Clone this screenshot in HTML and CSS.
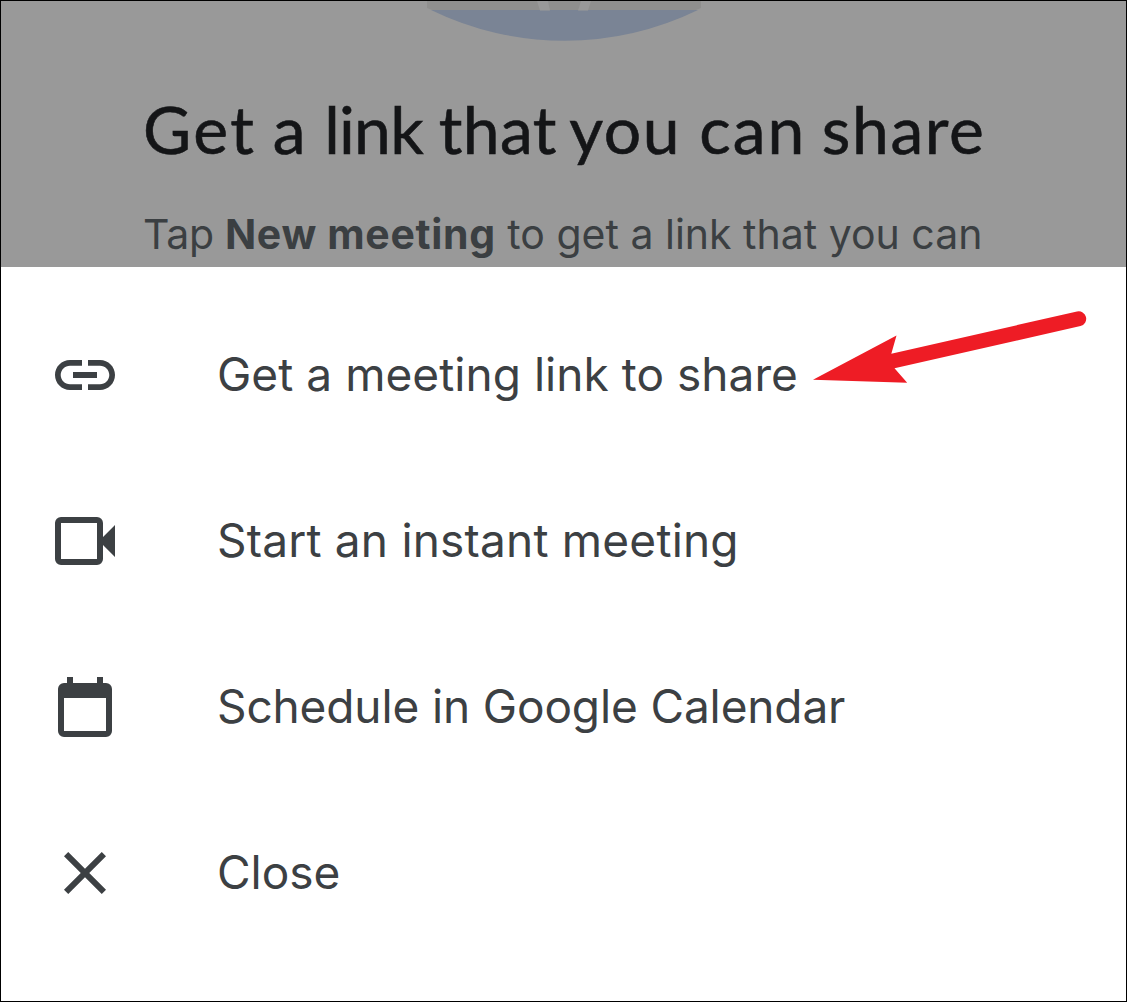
FILE: index.html
```
<!DOCTYPE html>
<html lang="en">
<head>
  <meta charset="utf-8">
  <title>New meeting</title>
  <link rel="stylesheet" href="styles.css">
</head>
<body>
  <main class="screen">
    <section class="page">
      <svg class="illustration" viewBox="0 0 290 42" aria-hidden="true">
        <path class="illustration-disc" d="M11 9H278A305 305 0 0 1 11 9Z"/>
        <path class="illustration-figure" d="M7 0H281V7L276 9H12L7 7Z"/>
        <path class="illustration-gap" d="M117 0H128L130 9.500H120ZM161 0H171L168 9.500H158Z"/>
      </svg>
      <h1 class="title"><span class="word-get">Get</span> a <span class="word-link">link</span> <span class="word-that">that</span> <span class="word-you">you</span> <span class="word-can">can</span> <span class="word-share">share</span></h1>
      <p class="hint"><span class="hint-lead">Tap </span><strong>New meeting</strong> to get a link that you can</p>
    </section>
    <ul class="sheet">
      <li class="option">
        <svg class="icon" viewBox="0 0 24 24" aria-hidden="true"><path d="M3.9 12c0-1.710 1.390-3.100 3.100-3.100h4V7H7c-2.760 0-5 2.240-5 5s2.240 5 5 5h4v-1.900H7c-1.710 0-3.100-1.390-3.100-3.100zM8 13h8v-2H8v2zm9-6h-4v1.900h4c1.710 0 3.100 1.390 3.100 3.100s-1.390 3.100-3.100 3.100h-4V17h4c2.760 0 5-2.240 5-5s-2.240-5-5-5z"/></svg>
        <span class="label label-link">Get a meeting link to share</span>
      </li>
      <li class="option">
        <svg class="icon" viewBox="0 0 24 24" aria-hidden="true"><path fill-rule="evenodd" d="M4 4h12a2 2 0 0 1 2 2v4.670l4-4v10.660l-4-4V18a2 2 0 0 1-2 2H4a2 2 0 0 1-2-2V6a2 2 0 0 1 2-2zM4 6v12h12V6z"/></svg>
        <span class="label label-instant">Start an instant meeting</span>
      </li>
      <li class="option">
        <svg class="icon" viewBox="0 0 24 24" aria-hidden="true"><path fill-rule="evenodd" d="M6 2h2v2h8V2h2v2h1a2 2 0 0 1 2 2v14a2 2 0 0 1-2 2H5a2 2 0 0 1-2-2V6a2 2 0 0 1 2-2h1zM5 9v11h14V9z"/></svg>
        <span class="label label-schedule">Schedule in Google Calendar</span>
      </li>
      <li class="option">
        <svg class="icon" viewBox="0 0 24 24" aria-hidden="true"><path d="M19 6.410L17.590 5 12 10.590 6.410 5 5 6.410 10.590 12 5 17.590 6.410 19 12 13.410 17.590 19 19 17.590 13.410 12z"/></svg>
        <span class="label">Close</span>
      </li>
    </ul>
    <svg class="pointer" viewBox="0 0 280 80" aria-hidden="true"><path d="M3 69.800L86.500 25.500 81.300 43.700 267 1.500A7.400 7.400 0 0 1 270.500 16L84.500 58.200 97.200 72.700Z"/></svg>
  </main>
</body>
</html>
```
FILE: styles.css
```
* {
  box-sizing: border-box;
}

body {
  margin: 0;
  font-family: Inter, "Liberation Sans", sans-serif;
  color: #3c4043;
  background: #fff;
}

.screen {
  position: relative;
  display: flex;
  flex-direction: column;
  width: 1127px;
  height: 1002px;
  border: 1px solid #000;
  overflow: hidden;
}

.page {
  flex: none;
  display: flex;
  flex-direction: column;
  align-items: flex-start;
  height: 266px;
  background: #999;
  overflow: hidden;
}

.illustration {
  flex: none;
  width: 290px;
  height: 42px;
  margin-left: 419px;
}

.illustration-disc {
  fill: #7a8495;
}

.illustration-figure {
  fill: #8f8f8e;
}

.illustration-gap {
  fill: #999;
}

.title {
  margin: 46px 0 0 142px;
  font-family: Lato, "Liberation Sans", sans-serif;
  font-size: 66px;
  font-weight: 400;
  line-height: 80px;
  letter-spacing: 0.4px;
  word-spacing: 1.1px;
  white-space: nowrap;
  color: #141517;
  -webkit-text-stroke: 0.6px #141517;
}

.word-get {
  margin-right: -2px;
  letter-spacing: 2.4px;
}

.word-link {
  margin-right: -2.5px;
  letter-spacing: -0.8px;
}

.word-that {
  margin-right: -6px;
}

.word-you {
  letter-spacing: 1.4px;
}

.word-can {
  margin-right: -3px;
  letter-spacing: 2px;
}

.word-share {
  letter-spacing: 1.6px;
}

.hint {
  margin: 40px 0 0 143px;
  font-size: 41px;
  line-height: 50px;
  white-space: nowrap;
  color: #3b3f42;
}

.hint-lead {
  margin-left: -1px;
  letter-spacing: -0.3px;
}

.hint strong {
  font-weight: 700;
  letter-spacing: 0.67px;
}

.sheet {
  flex: 1;
  margin: 0;
  padding: 25px 48px 0;
  list-style: none;
}

.option {
  display: flex;
  align-items: center;
  gap: 96px;
  height: 166px;
}

.icon {
  flex: none;
  width: 72px;
  height: 72px;
  fill: #3c4043;
}

.label {
  padding-bottom: 2px;
  font-size: 46px;
  line-height: 56px;
  white-space: nowrap;
}

.label-link {
  letter-spacing: 0.04px;
}

.label-instant {
  letter-spacing: 0.2px;
}

.label-schedule {
  letter-spacing: -0.13px;
}

.pointer {
  position: absolute;
  top: 309px;
  left: 808.5px;
  width: 280px;
  height: 80px;
  fill: #ee1c25;
}
```
